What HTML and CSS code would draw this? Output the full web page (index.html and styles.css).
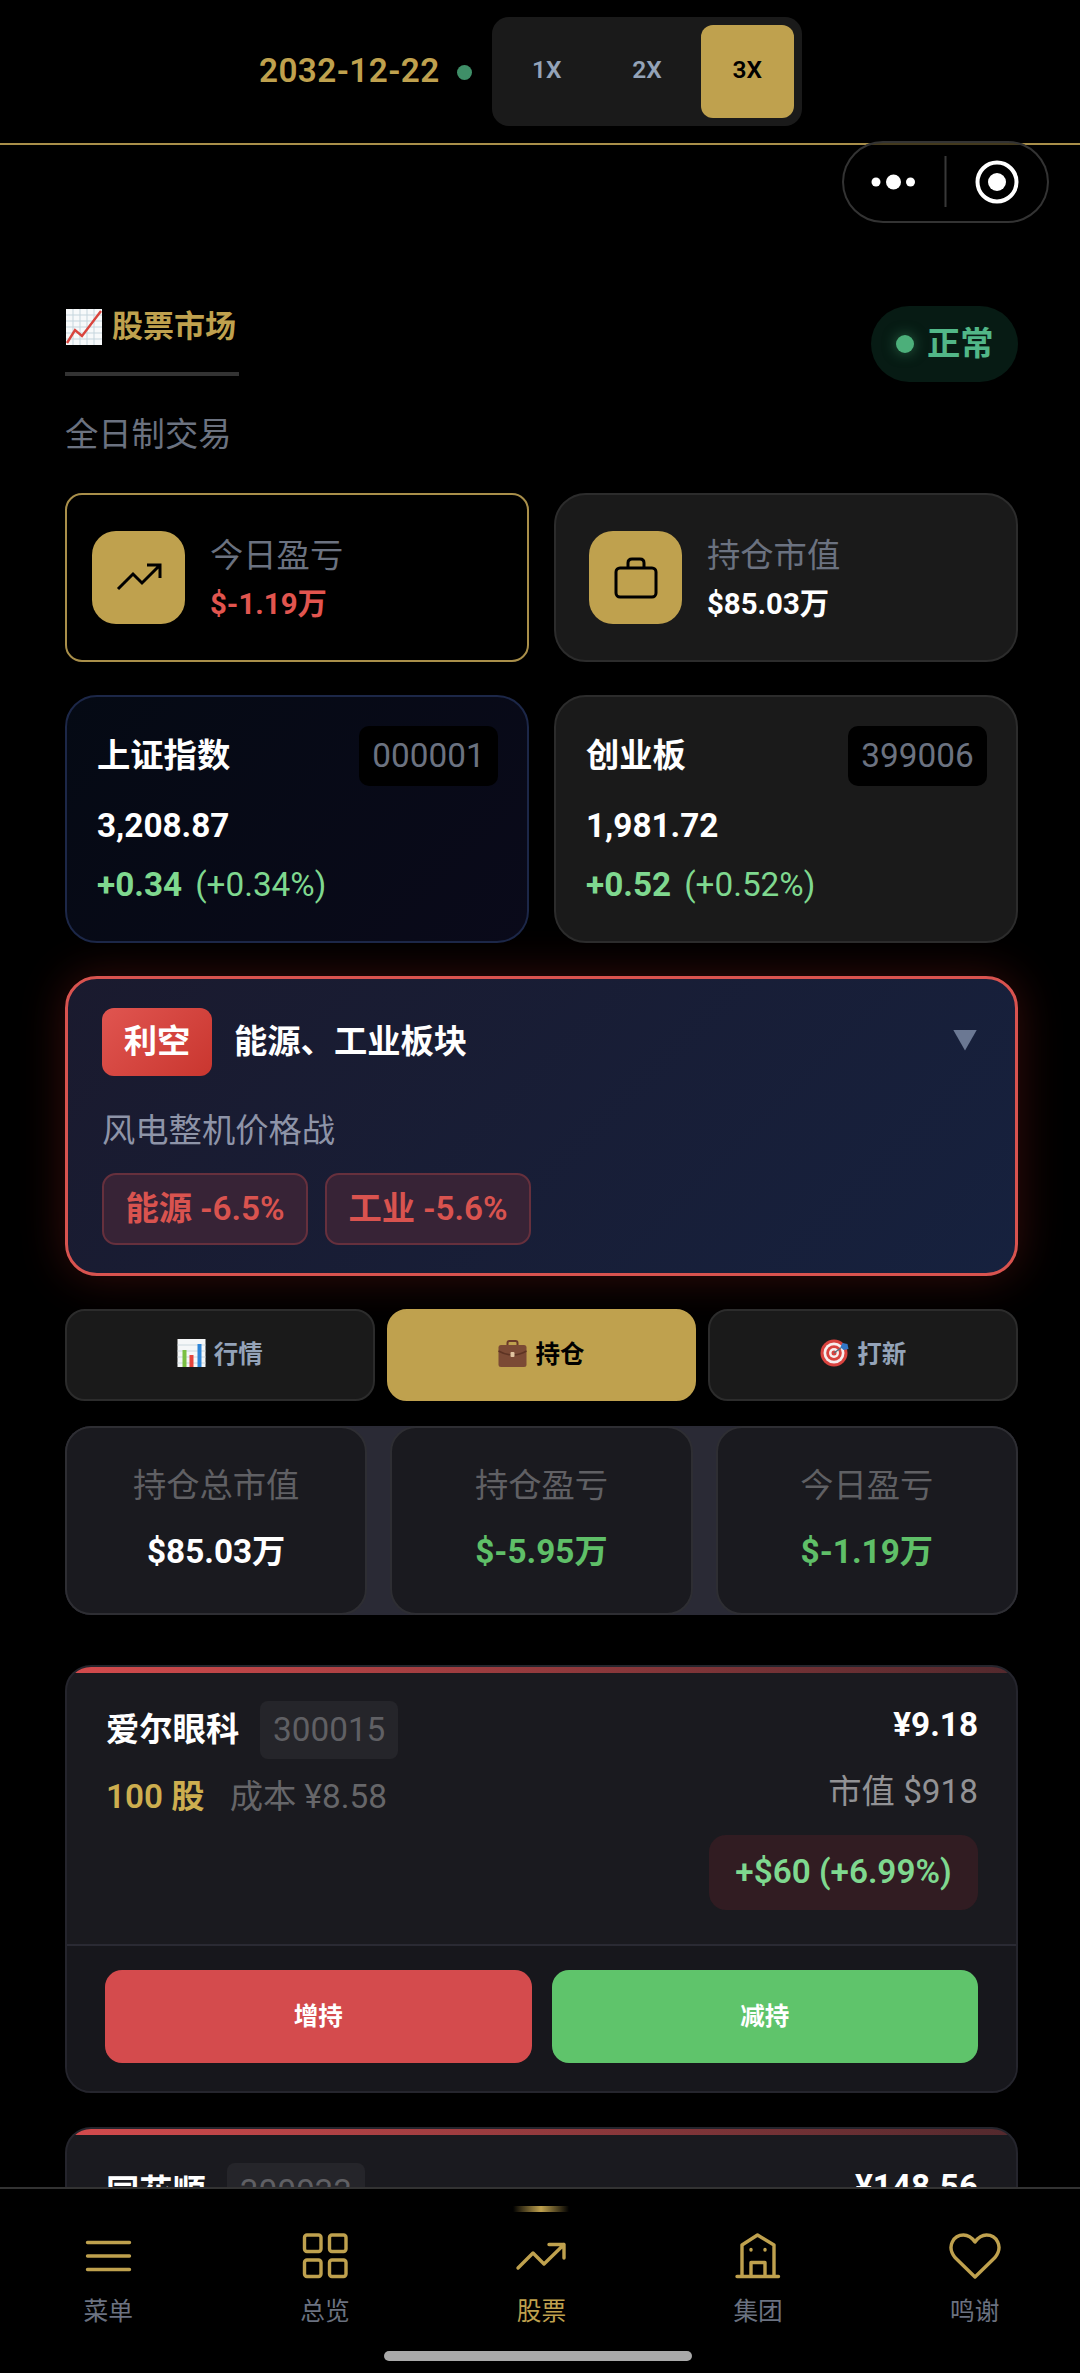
FILE: index.html
```
<!DOCTYPE html>
<html lang="zh-CN">
<head>
<meta charset="utf-8">
<title>股票市场</title>
<link rel="stylesheet" href="styles.css">
</head>
<body>
<div class="app">
  <header class="topbar">
    <span class="date">2032-12-22</span>
    <i class="live"></i>
    <div class="speeds"><button class="speed">1X</button><button class="speed">2X</button><button class="speed on">3X</button></div>
  </header>
  <div class="capsule">
    <svg width="207" height="82" viewBox="0 0 207 82">
      <circle cx="34" cy="41" r="4.5"/><circle cx="51.500" cy="41" r="7.500"/><circle cx="68.500" cy="41" r="4.500"/>
      <path class="split" d="M103.500 15V66"/>
      <circle class="ring" cx="155" cy="41" r="19.500"/><circle cx="155" cy="41" r="9"/>
    </svg>
  </div>

  <main class="page">
    <section class="heading">
      <div>
        <h1 class="title"><svg class="emoji-lg" viewBox="0 0 38 36"><rect x="1" width="36" height="36" fill="#f7f9fa"/><path d="M8 0V36M15 0V36M22 0V36M29 0V36M1 6H37M1 12H37M1 18H37M1 24H37M1 30H37" stroke="#c5d5dd" stroke-width="1"/><path d="M2 34L10 21L17 27L36 2" fill="none" stroke="#d9453e" stroke-width="2.400"/></svg>股票市场</h1>
        <p class="subtitle">全日制交易</p>
      </div>
      <span class="status"><i></i>正常</span>
    </section>

    <section class="pair stats">
      <div class="stat gold">
        <span class="tile"><svg viewBox="0 0 48 48"><path d="M3 35L18 20L27 29L45 11M32 11H45V24"/></svg></span>
        <div><p class="label">今日盈亏</p><p class="amount red">$-1.19万</p></div>
      </div>
      <div class="stat">
        <span class="tile"><svg viewBox="0 0 48 48"><rect x="4" y="14" width="40" height="29" rx="4"/><path d="M16 14V9Q16 5 20 5H28Q32 5 32 9V14"/></svg></span>
        <div><p class="label">持仓市值</p><p class="amount">$85.03万</p></div>
      </div>
    </section>

    <section class="pair indexes">
      <div class="index navy">
        <div class="row"><b>上证指数</b><span class="code">000001</span></div>
        <p class="points">3,208.87</p>
        <p class="change"><b>+0.34</b><span>(+0.34%)</span></p>
      </div>
      <div class="index">
        <div class="row"><b>创业板</b><span class="code">399006</span></div>
        <p class="points">1,981.72</p>
        <p class="change"><b>+0.52</b><span>(+0.52%)</span></p>
      </div>
    </section>

    <section class="news">
      <div class="news-head"><span class="mood">利空</span><b>能源、工业板块</b><i class="caret"></i></div>
      <p class="news-text">风电整机价格战</p>
      <div class="tags"><span>能源 -6.5%</span><span>工业 -5.6%</span></div>
    </section>

    <nav class="tabs">
      <button><svg viewBox="0 0 28 28"><rect width="28" height="28" fill="#f5f7f8"/><path d="M0 6H28M0 12H28M0 18H28M0 24H28" stroke="#cbd8de"/><path d="M5 11H9V28H5Z" fill="#7bc043"/><path d="M12 16H16V28H12Z" fill="#e5443c"/><path d="M20 5H24V28H20Z" fill="#2f86d8"/></svg>行情</button>
      <button class="on"><svg viewBox="0 0 28 28"><path d="M9 7V4Q9 2 11 2H17Q19 2 19 4V7" fill="none" stroke="#6b3a28" stroke-width="2"/><rect y="6" width="28" height="22" rx="2.500" fill="#7b4a35"/><path d="M0 12Q14 20 28 12" fill="none" stroke="#5d3323" stroke-width="1.500"/><rect x="12" y="13" width="4" height="5" rx="1" fill="#e0c3a0"/></svg>持仓</button>
      <button><svg viewBox="0 0 28 28"><circle cx="13.500" cy="14" r="13.500" fill="#d9433f"/><circle cx="13.500" cy="14" r="10.500" fill="#f6eeee"/><circle cx="13.500" cy="14" r="7.800" fill="#d9433f"/><circle cx="13.500" cy="14" r="5" fill="#f6eeee"/><circle cx="13.500" cy="14" r="2.500" fill="#d9433f"/><path d="M13.500 14L23 7" stroke="#56707e" stroke-width="1.300"/><path d="M20 8L22 4L27 5L28 10L23 11Z" fill="#3277c8"/></svg>打新</button>
    </nav>

    <section class="summary">
      <div><p>持仓总市值</p><b>$85.03万</b></div>
      <div><p>持仓盈亏</p><b class="green">$-5.95万</b></div>
      <div><p>今日盈亏</p><b class="green">$-1.19万</b></div>
    </section>

    <section class="holdings">
      <article class="holding">
        <div class="info">
          <div>
            <div class="name"><b>爱尔眼科</b><span class="chip">300015</span></div>
            <p class="shares"><b>100 股</b><span>成本 ¥8.58</span></p>
          </div>
          <div class="right"><p class="price">¥9.18</p><p class="worth">市值 $918</p><p class="gain">+$60 (+6.99%)</p></div>
        </div>
        <div class="actions"><button class="buy">增持</button><button class="sell">减持</button></div>
      </article>
      <article class="holding">
        <div class="info">
          <div><div class="name"><b>同花顺</b><span class="chip">300033</span></div></div>
          <div class="right"><p class="price">¥148.56</p></div>
        </div>
      </article>
    </section>
  </main>

  <footer class="dock">
    <nav class="dock-items">
      <a><svg viewBox="0 0 54 54"><path d="M6.500 13.500H48.500M6.500 27H48.500M6.500 40.500H48.500"/></svg>菜单</a>
      <a><svg viewBox="0 0 54 54"><rect x="6.500" y="6" width="16.500" height="16.500" rx="2.500"/><rect x="31.500" y="6" width="16.500" height="16.500" rx="2.500"/><rect x="6.500" y="31" width="16.500" height="16.500" rx="2.500"/><rect x="31.500" y="31" width="16.500" height="16.500" rx="2.500"/></svg>总览</a>
      <a class="on"><svg viewBox="0 0 54 54"><path d="M4 39L19 24L30 35L50 15.500M35 15.500H50V29"/></svg>股票</a>
      <a><svg viewBox="0 0 54 54"><path d="M6 47.500H47.500M11 47V16L26.500 6L43 16V47M20 47V33.500H34V47M20 20.500V21M34 20.500V21"/></svg>集团</a>
      <a><svg viewBox="0 0 54 54"><path d="M27 48L7 28.500C-2 17 6 6 15.500 6C21 6 24.500 9.500 27 13C29.500 9.500 33 6 38.500 6C48 6 56 17 47 28.500Z"/></svg>鸣谢</a>
    </nav>
    <div class="home"></div>
  </footer>
</div>
</body>
</html>
```
FILE: styles.css
```
* { box-sizing: border-box; margin: 0; padding: 0; }
body { background: #000; color: #fff; font-family: Roboto, "Noto Sans CJK SC", sans-serif; font-size: 33.300px; line-height: 40px; }
button { border: 0; font-family: inherit; background: none; color: inherit; }
b { font-weight: 700; }
svg { display: block; fill: none; }
.app { position: relative; width: 1080px; height: 2373px; overflow: hidden; display: flex; flex-direction: column; }

.topbar { height: 145px; flex: none; border-bottom: 2px solid #a98f4a; display: flex; align-items: flex-start; padding: 17px 0 0 259px; }
.date { color: #bfa14e; font-weight: 600; width: 198px; letter-spacing: .4px; margin-top: 34px; }
.live { width: 15px; height: 15px; border-radius: 50%; background: #3f8f68; margin: 48px 20px 0 0; }
.speeds { width: 310px; height: 109px; background: #1a1a1a; border-radius: 17px; display: flex; gap: 7px; padding: 8px; }
.speed { flex: 1; border-radius: 12px; font-size: 24.500px; font-weight: 600; color: #94a3b8; padding-bottom: 5px; }
.speed.on { background: #bfa14e; color: #000; }

.capsule { position: absolute; left: 842px; top: 141px; width: 207px; height: 82px; }
.capsule svg { border-radius: 41px; background: rgba(0,0,0,.6); box-shadow: inset 0 0 0 2px #333; fill: #fff; }
.capsule .split { stroke: #383838; stroke-width: 2; }
.capsule .ring { fill: none; stroke: #fff; stroke-width: 4; }

.page { padding: 161px 62px 0 65px; flex: none; }
.heading { display: flex; justify-content: space-between; align-items: flex-start; height: 187px; }
.title { display: flex; align-items: center; gap: 9px; width: 174px; height: 70px; padding: 1px 0 25px; border-bottom: 4px solid #333; font-size: 31px; font-weight: 700; color: #bfa14e; white-space: nowrap; }
.emoji-lg { width: 38px; height: 36px; flex: none; }
.subtitle { color: #6b7280; margin-top: 39px; }
.status { width: 147px; height: 76px; border-radius: 38px; background: #071b14; color: #52b788; font-weight: 600; display: flex; align-items: center; padding-left: 25px; gap: 13px; }
.status i { width: 18px; height: 18px; border-radius: 50%; background: #4caf7a; box-shadow: 0 0 14px rgba(76,175,122,.5); }

.pair { display: grid; grid-template-columns: 1fr 1fr; gap: 25px; }
.stat { height: 169px; border: 2px solid #2c2c2c; border-radius: 32px; background: #1a1a1a; display: flex; align-items: center; gap: 25px; padding-left: 33px; }
.stat.gold { background: #000; border-color: #a98f4a; border-radius: 17px; padding-left: 25px; }
.tile { width: 93px; height: 93px; border-radius: 24px; background: #bfa14e; display: grid; place-items: center; }
.tile svg { width: 48px; height: 48px; stroke: #000; stroke-width: 3; }
.label { color: #6b7280; line-height: 44px; margin: 2px 0 6px; }
.amount { font-size: 29.400px; font-weight: 700; }
.red { color: #e2554f; }
.green { color: #5fbf68; }
.indexes { margin-top: 33px; }
.index { height: 248px; border: 2px solid #2c2c2c; border-radius: 32px; background: #1a1a1a; padding: 29px 29px 29px 30px; }
.index.navy { background: linear-gradient(135deg, #050a14, #0a0a1a); border-color: #1c2748; }
.row { display: flex; justify-content: space-between; align-items: center; }
.code { background: #000; color: #6b7280; border-radius: 10px; line-height: 60px; width: 139px; text-align: center; }
.points { font-weight: 700; margin-top: 20px; }
.change { color: #7fd88f; margin-top: 19px; display: flex; gap: 13px; }

.news { margin-top: 33px; height: 300px; border: 3px solid #d9534f; border-radius: 32px; background: linear-gradient(135deg, #1a1a2e, #16213e); box-shadow: 0 0 45px rgba(217,50,45,.25); padding: 29px 38px 0 34px; }
.news-head { display: flex; align-items: center; gap: 22px; height: 68px; }
.mood { width: 110px; line-height: 68px; border-radius: 12px; background: linear-gradient(135deg, #e05550, #c9362f); text-align: center; font-weight: 700; }
.caret { margin: 0 0 4px auto; width: 24px; height: 21px; background: #6b7893; clip-path: polygon(0 0, 100% 0, 50% 100%); }
.news-text { color: #8e94a8; margin-top: 35px; }
.tags { display: flex; gap: 17px; margin-top: 22px; }
.tags span { width: 206px; height: 72px; line-height: 67px; text-align: center; border: 2px solid #66303d; border-radius: 14px; background: #372336; color: #d9534f; font-weight: 600; }

.tabs { display: grid; grid-template-columns: repeat(3, 1fr); gap: 12px; margin-top: 33px; }
.tabs button { height: 92px; border: 2px solid #2c2c2c; border-radius: 20px; background: #1a1a1a; color: #94a3b8; font-size: 24.500px; font-weight: 600; display: flex; align-items: center; justify-content: center; gap: 8px; padding-bottom: 5px; }
.tabs .on { background: #bfa14e; border-color: #bfa14e; color: #000; }
.tabs svg { width: 29px; height: 28px; }

.summary { display: grid; grid-template-columns: repeat(3, 1fr); gap: 23px; margin-top: 25px; height: 189px; border-radius: 26px; background: #2a2a35; overflow: hidden; text-align: center; }
.summary div { border: 2px solid #2e2e33; border-radius: 26px; background: #1a1a1f; padding-top: 38px; }
.summary p { color: #606064; margin-bottom: 26px; }

.holdings { margin-top: 50px; display: flex; flex-direction: column; gap: 34px; }
.holding { position: relative; height: 428px; border: 2px solid #25252d; border-radius: 26px; background: #1a1a1f; overflow: hidden; }
.holding::before { content: ""; position: absolute; left: 0; right: 0; top: 0; height: 6px; background: linear-gradient(90deg, #d44b4d, rgba(212,75,77,.3)); }
.info { display: flex; justify-content: space-between; padding: 34px 38px 0 39px; height: 277px; }
.name { display: flex; align-items: center; gap: 21px; }
.chip { width: 138px; line-height: 58px; text-align: center; background: #25252a; border-radius: 8px; color: #606064; }
.shares { display: flex; gap: 25px; margin-top: 18px; color: #666669; }
.shares b { color: #cdae4f; font-weight: 600; }
.right { text-align: right; display: flex; flex-direction: column; align-items: flex-end; }
.price { font-weight: 700; margin-top: 4px; }
.worth { color: #929295; margin-top: 27px; }
.gain { margin-top: 23px; width: 269px; height: 75px; line-height: 73px; text-align: center; border-radius: 17px; background: #311c22; color: #7fd88f; font-weight: 600; }
.actions { border-top: 2px solid #2a2a33; height: 148px; background: #17171c; padding: 24px 38px 0; display: flex; gap: 20px; }
.actions button { flex: 1; height: 93px; border-radius: 17px; font-size: 24.500px; font-weight: 700; padding-bottom: 5px; }
.buy { background: #d44b4d; }
.sell { background: #5fc46b; }

.dock { position: absolute; left: 0; right: 0; bottom: 0; height: 186px; background: #000; border-top: 2px solid #333; }
.dock-items { display: grid; grid-template-columns: repeat(5, 1fr); height: 161px; margin-right: -3px; }
.dock-items a { position: relative; display: flex; flex-direction: column; align-items: center; padding-top: 40px; font-size: 24.700px; line-height: 36px; gap: 11px; color: #6b7280; }
.dock-items svg { width: 54px; height: 54px; stroke: #bfa14e; stroke-width: 3.400; stroke-linecap: round; stroke-linejoin: round; }
.dock-items .on { color: #bfa14e; }
.dock-items .on::before { content: ""; position: absolute; top: 17px; width: 56px; height: 6px; background: linear-gradient(90deg, transparent, #bfa14e, transparent); }
.home { width: 308px; height: 10px; border-radius: 5px; background: #a9a9a9; margin: 1px 0 0 384px; }
```
